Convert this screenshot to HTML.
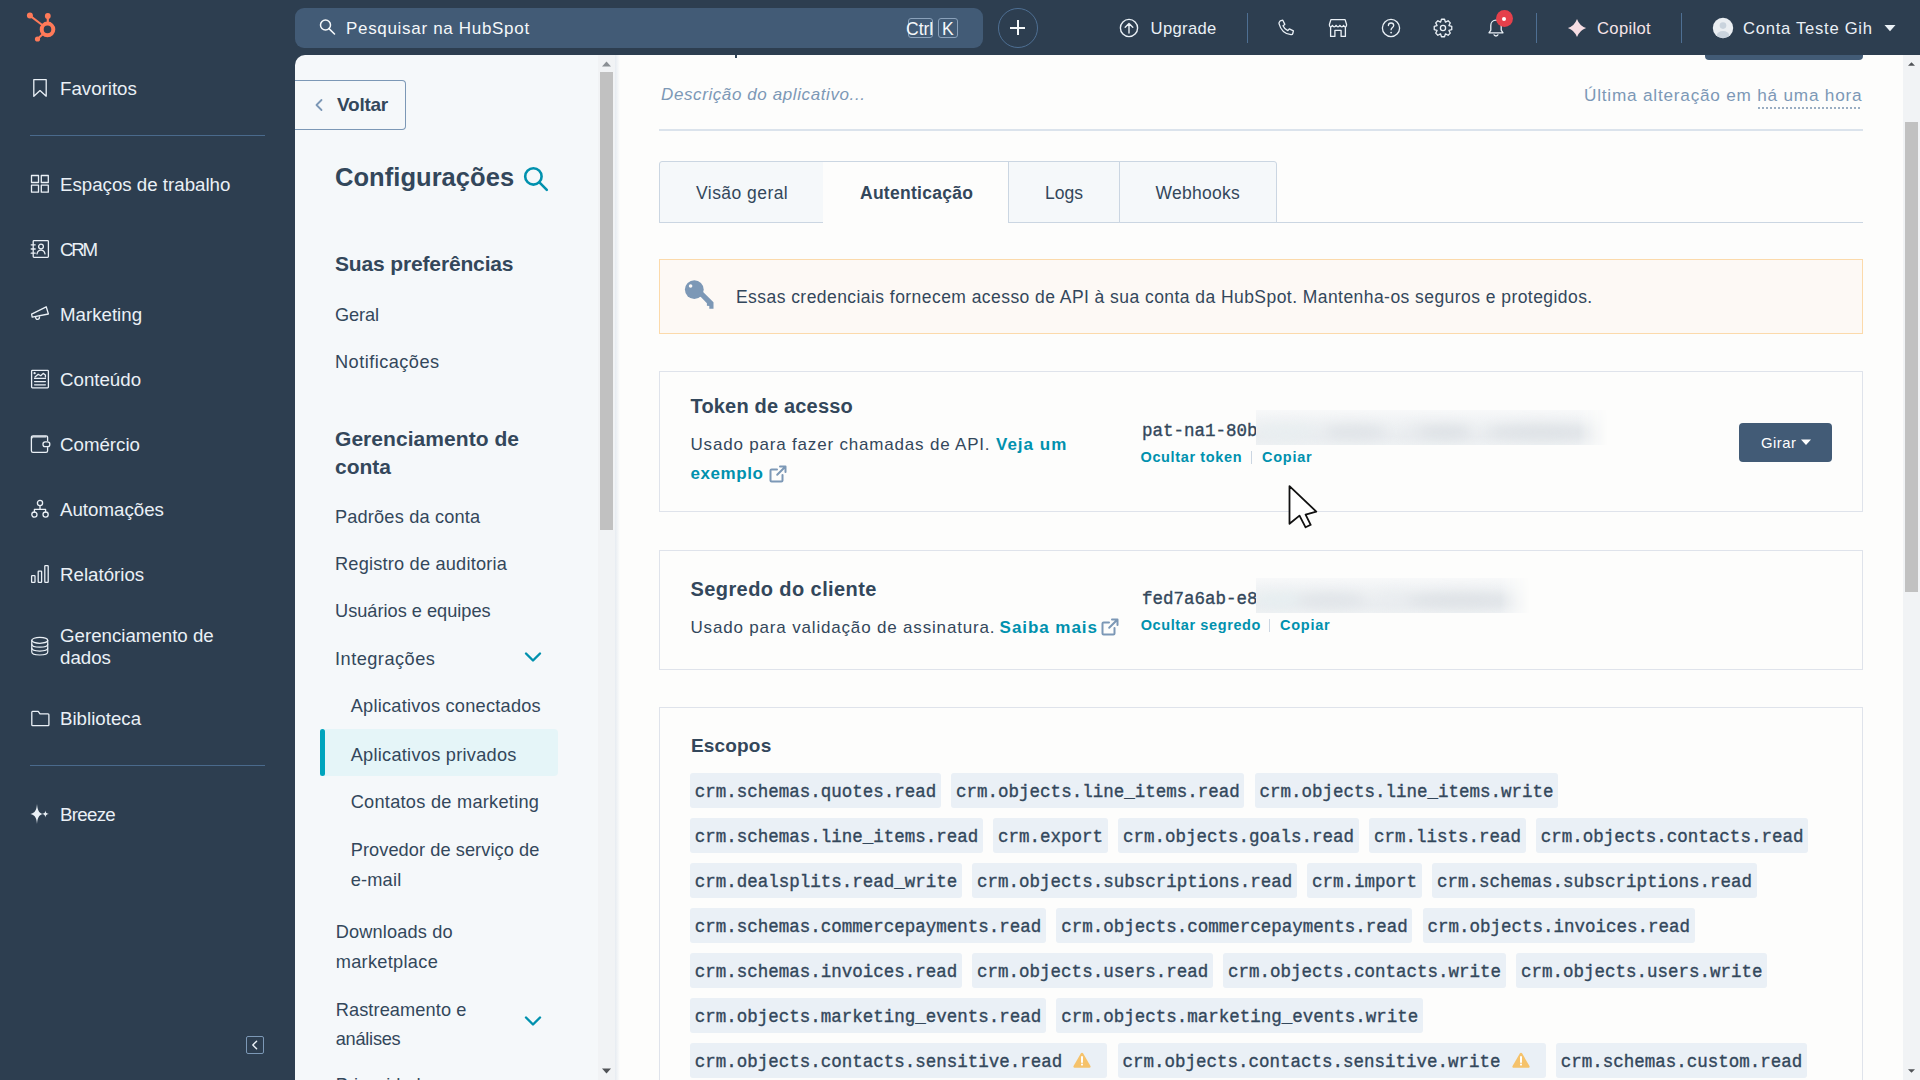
<!DOCTYPE html>
<html><head><meta charset="utf-8">
<style>
*{margin:0;padding:0;box-sizing:border-box}
html,body{width:1920px;height:1080px;overflow:hidden;background:#2d3e50;font-family:"Liberation Sans",sans-serif}
.a{position:absolute}
.t{position:absolute;white-space:nowrap;line-height:20px;height:20px}
.si{color:#eaf0f6;font-size:18.7px;left:60px}
.hr1{position:absolute;left:30px;width:235px;height:1px;background:#4a6a8c}
.tag{height:34.6px;line-height:39.4px;padding:0 4.7px;margin-right:10.5px;background:#eaf0f6;border-radius:3px;font-family:"Liberation Mono",monospace;font-size:17.5px;color:#33475b;white-space:nowrap;-webkit-text-stroke:0.35px #33475b}
</style></head><body>
<div class="a" style="left:295px;top:55px;width:320px;height:1025px;background:#f5f8fa;border-top-left-radius:10px"></div>
<div class="a" style="left:615px;top:55px;width:1305px;height:1025px;background:#fdfdfc"></div>
<div class="a" style="left:295px;top:80px;width:111px;height:50px;border:1px solid #7c98b6;border-left:none;border-radius:0 4px 4px 0;background:#f5f8fa"></div>
<svg class="a" style="left:312px;top:97px" width="14" height="16" viewBox="0 0 14 16" fill="none" stroke="#7c98b6" stroke-width="1.8" stroke-linecap="round" stroke-linejoin="round"><path d="M9.5 3l-5 5 5 5"/></svg>
<div class="t" style="left:337px;top:94.8px;font-size:19px;line-height:20px;height:20px;font-weight:bold;color:#33475b;letter-spacing:-0.240px;">Voltar</div>
<div class="t" style="left:335px;top:161.7px;font-size:25.5px;line-height:30px;height:30px;font-weight:bold;color:#33475b;letter-spacing:0.050px;">Configurações</div>
<svg class="a" style="left:523px;top:166px" width="26" height="26" viewBox="0 0 26 26" fill="none" stroke="#0091ae" stroke-width="2.6" stroke-linecap="round"><circle cx="10.4" cy="10.4" r="8.2"/><path d="M16.4 16.4l7.4 7.4"/></svg>
<div class="t" style="left:335px;top:251.9px;font-size:21px;line-height:24px;height:24px;font-weight:bold;color:#33475b;letter-spacing:-0.150px;">Suas preferências</div>
<div class="t" style="left:335px;top:305.0px;font-size:18.2px;line-height:20px;height:20px;font-weight:normal;color:#33475b;letter-spacing:-0.125px;">Geral</div>
<div class="t" style="left:335px;top:352.0px;font-size:18.2px;line-height:20px;height:20px;font-weight:normal;color:#33475b;letter-spacing:0.455px;">Notificações</div>
<div class="t" style="left:335px;top:506.5px;font-size:18.2px;line-height:20px;height:20px;font-weight:normal;color:#33475b;letter-spacing:0.167px;">Padrões da conta</div>
<div class="t" style="left:335px;top:554.3px;font-size:18.2px;line-height:20px;height:20px;font-weight:normal;color:#33475b;letter-spacing:0.200px;">Registro de auditoria</div>
<div class="t" style="left:335px;top:601.3px;font-size:18.2px;line-height:20px;height:20px;font-weight:normal;color:#33475b;letter-spacing:0.000px;">Usuários e equipes</div>
<div class="t" style="left:335px;top:649.0px;font-size:18.2px;line-height:20px;height:20px;font-weight:normal;color:#33475b;letter-spacing:0.480px;">Integrações</div>
<div class="t" style="left:335px;top:427.4px;font-size:21px;line-height:24px;height:24px;font-weight:bold;color:#33475b;letter-spacing:0.053px;">Gerenciamento de</div>
<div class="t" style="left:335px;top:455.0px;font-size:21px;line-height:24px;height:24px;font-weight:bold;color:#33475b;letter-spacing:0.000px;">conta</div>
<svg class="a" style="left:524px;top:651px" width="18" height="12" viewBox="0 0 18 12" fill="none" stroke="#0091ae" stroke-width="2.4" stroke-linecap="round" stroke-linejoin="round"><path d="M2 2.5l7 7 7-7"/></svg>
<div class="a" style="left:320px;top:729px;width:238px;height:47px;background:#e5f5f8;border-radius:0 4px 4px 0"></div>
<div class="a" style="left:320px;top:729px;width:5px;height:47px;background:#00a4bd;border-radius:3px"></div>
<div class="t" style="left:350.7px;top:696.0px;font-size:18.2px;line-height:20px;height:20px;font-weight:normal;color:#33475b;letter-spacing:0.238px;">Aplicativos conectados</div>
<div class="t" style="left:350.7px;top:744.7px;font-size:18.2px;line-height:20px;height:20px;font-weight:normal;color:#33475b;letter-spacing:0.263px;">Aplicativos privados</div>
<div class="t" style="left:350.7px;top:791.8px;font-size:18.2px;line-height:20px;height:20px;font-weight:normal;color:#33475b;letter-spacing:0.265px;">Contatos de marketing</div>
<div class="t" style="left:350.7px;top:839.7px;font-size:18.2px;line-height:20px;height:20px;font-weight:normal;color:#33475b;letter-spacing:0.076px;">Provedor de serviço de</div>
<div class="t" style="left:350.7px;top:869.7px;font-size:18.2px;line-height:20px;height:20px;font-weight:normal;color:#33475b;letter-spacing:0.200px;">e-mail</div>
<div class="t" style="left:335.7px;top:921.8px;font-size:18.2px;line-height:20px;height:20px;font-weight:normal;color:#33475b;letter-spacing:0.145px;">Downloads do</div>
<div class="t" style="left:335.7px;top:951.5px;font-size:18.2px;line-height:20px;height:20px;font-weight:normal;color:#33475b;letter-spacing:0.300px;">marketplace</div>
<div class="t" style="left:335.7px;top:999.7px;font-size:18.2px;line-height:20px;height:20px;font-weight:normal;color:#33475b;letter-spacing:0.100px;">Rastreamento e</div>
<div class="t" style="left:335.7px;top:1029.3px;font-size:18.2px;line-height:20px;height:20px;font-weight:normal;color:#33475b;letter-spacing:-0.243px;">análises</div>
<div class="t" style="left:335.7px;top:1074.5px;font-size:18.2px;line-height:20px;height:20px;font-weight:normal;color:#33475b;letter-spacing:0.000px;">Privacidade e</div>
<svg class="a" style="left:524px;top:1015px" width="18" height="12" viewBox="0 0 18 12" fill="none" stroke="#0091ae" stroke-width="2.4" stroke-linecap="round" stroke-linejoin="round"><path d="M2 2.5l7 7 7-7"/></svg>
<div class="a" style="left:598px;top:55px;width:17px;height:1025px;background:#f1f3f5"></div>
<div class="a" style="left:600px;top:72px;width:13px;height:458px;background:#c1c1c1"></div>
<svg class="a" style="left:602px;top:61px" width="9" height="6" viewBox="0 0 9 6"><path d="M0 5.5L4.5 .5 9 5.5z" fill="#8a8f94"/></svg>
<svg class="a" style="left:602px;top:1068px" width="9" height="6" viewBox="0 0 9 6"><path d="M0 .5L4.5 5.5 9 .5z" fill="#505357"/></svg>
<div class="a" style="left:615px;top:55px;width:5px;height:1025px;background:linear-gradient(90deg,#e6ebf1,#fdfdfc)"></div>
<div class="a" style="left:1705px;top:50px;width:158px;height:10px;background:#425b76;border-radius:0 0 4px 4px"></div>
<div class="a" style="left:734.5px;top:55px;width:2px;height:3px;background:#33475b"></div>
<div class="t" style="left:661px;top:84.8px;font-size:17px;line-height:20px;height:20px;font-weight:normal;color:#7c98b6;letter-spacing:0.600px;font-style:italic;">Descrição do aplicativo...</div>
<div class="t" style="left:1584px;top:84.8px;font-size:17.2px;line-height:20px;height:20px;font-weight:normal;color:#7c98b6;letter-spacing:0.783px;">Última alteração em há uma hora</div>
<div class="a" style="left:1758px;top:107px;width:103px;height:2px;background:repeating-linear-gradient(90deg,#9aaec3 0 2px,transparent 2px 4px)"></div>
<div class="a" style="left:659px;top:129px;width:1204px;height:2px;background:#dbe3ec"></div>
<div class="a" style="left:659px;top:222px;width:1204px;height:1px;background:#cbd6e2"></div>
<div class="a" style="left:659px;top:161px;width:165px;height:62px;background:#f5f8fa;border:1px solid #cbd6e2;border-top-left-radius:3px"></div>
<div class="a" style="left:823px;top:161px;width:186px;height:62px;background:#fdfdfc;border-top:1px solid #cbd6e2"></div>
<div class="a" style="left:1008px;top:161px;width:112px;height:62px;background:#f5f8fa;border:1px solid #cbd6e2"></div>
<div class="a" style="left:1119px;top:161px;width:158px;height:62px;background:#f5f8fa;border:1px solid #cbd6e2;border-top-right-radius:3px"></div>
<div class="t" style="left:696px;top:182.8px;font-size:17.5px;line-height:20px;height:20px;font-weight:normal;color:#33475b;letter-spacing:0.450px;">Visão geral</div>
<div class="t" style="left:860px;top:182.8px;font-size:17.5px;line-height:20px;height:20px;font-weight:bold;color:#33475b;letter-spacing:0.273px;">Autenticação</div>
<div class="t" style="left:1045px;top:182.8px;font-size:17.5px;line-height:20px;height:20px;font-weight:normal;color:#33475b;letter-spacing:0.000px;">Logs</div>
<div class="t" style="left:1155.5px;top:182.8px;font-size:17.5px;line-height:20px;height:20px;font-weight:normal;color:#33475b;letter-spacing:0.286px;">Webhooks</div>
<div class="a" style="left:659px;top:259px;width:1204px;height:75px;background:#fdf9f5;border:1px solid #fcdaab"></div>
<svg class="a" style="left:683px;top:279px" width="34" height="34" viewBox="0 0 34 34"><g fill="#7c98b6"><circle cx="11.3" cy="10.6" r="9.4"/><path d="M14.5 14.5l3.6-3.6 12.4 12.4v6.4h-4.2v-2.6l-2.4-.4v-2.4z"/></g><circle cx="7.6" cy="7" r="1.8" fill="#fdf9f5"/></svg>
<div class="t" style="left:736px;top:286.7px;font-size:17.5px;line-height:20px;height:20px;font-weight:normal;color:#33475b;letter-spacing:0.443px;">Essas credenciais fornecem acesso de API à sua conta da HubSpot. Mantenha-os seguros e protegidos.</div>
<div class="a" style="left:659px;top:371px;width:1204px;height:141px;border:1px solid #dfe3eb"></div>
<div class="t" style="left:690.5px;top:393.9px;font-size:20px;line-height:24px;height:24px;font-weight:bold;color:#33475b;letter-spacing:0.179px;">Token de acesso</div>
<div class="t" style="left:690.5px;top:434.9px;font-size:17px;line-height:20px;height:20px;font-weight:normal;color:#33475b;letter-spacing:0.812px;">Usado para fazer chamadas de API.</div>
<div class="t" style="left:996px;top:434.9px;font-size:17px;line-height:20px;height:20px;font-weight:bold;color:#0091ae;letter-spacing:1.000px;">Veja um</div>
<div class="t" style="left:690.5px;top:463.5px;font-size:17px;line-height:20px;height:20px;font-weight:bold;color:#0091ae;letter-spacing:0.583px;">exemplo</div>
<svg class="a" style="left:769px;top:464.5px" width="18" height="18" viewBox="0 0 18 18" fill="none" stroke="#7c98b6" stroke-width="2" stroke-linecap="round" stroke-linejoin="round"><path d="M13.5 10v5.4c0 .6-.5 1.1-1.1 1.1H2.6c-.6 0-1.1-.5-1.1-1.1V5.6c0-.6.5-1.1 1.1-1.1H8"/><path d="M11 1.5h5.5V7M16.5 1.5L8.2 9.8"/></svg>
<div class="t" style="left:1142px;top:421px;font-family:'Liberation Mono',monospace;font-size:17.5px;line-height:20px;color:#33475b;-webkit-text-stroke:0.35px #33475b">pat-na1-80b</div>
<div class="a" style="left:1256px;top:410px;width:352px;height:35px;overflow:hidden;background:linear-gradient(180deg,#f7f8f9 0%,#eef1f3 45%,#eaedf0 75%,#eef1f3 100%);-webkit-mask-image:linear-gradient(90deg,#000 0%,#000 calc(100% - 30px),transparent 100%)"><div style="position:absolute;left:0;top:0;width:100%;height:100%;filter:blur(6px)"><div style="position:absolute;left:0px;top:14.7px;width:60px;height:14.7px;border-radius:50%;background:#e8eef0"></div><div style="position:absolute;left:60px;top:14.7px;width:50px;height:14.7px;border-radius:50%;background:#e9ecef"></div><div style="position:absolute;left:70px;top:14.7px;width:60px;height:14.7px;border-radius:50%;background:#dfe3e7"></div><div style="position:absolute;left:150px;top:14.7px;width:40px;height:14.7px;border-radius:50%;background:#e6e9ec"></div><div style="position:absolute;left:165px;top:14.7px;width:50px;height:14.7px;border-radius:50%;background:#dde1e5"></div><div style="position:absolute;left:230px;top:14.7px;width:110px;height:14.7px;border-radius:50%;background:#dde1e5"></div></div></div>
<div class="t" style="left:1140.5px;top:446.7px;font-size:14.5px;line-height:20px;height:20px;font-weight:bold;color:#0091ae;letter-spacing:0.633px;">Ocultar token</div>
<div class="a" style="left:1251px;top:451px;width:1px;height:13px;background:#cbd6e2"></div>
<div class="t" style="left:1262px;top:446.7px;font-size:14.5px;line-height:20px;height:20px;font-weight:bold;color:#0091ae;letter-spacing:0.740px;">Copiar</div>
<div class="a" style="left:1739px;top:423px;width:93px;height:39px;background:#425b76;border-radius:4px"></div>
<div class="t" style="left:1761px;top:432.7px;font-size:14.8px;line-height:20px;height:20px;font-weight:normal;color:#fff;letter-spacing:0.500px;">Girar</div>
<svg class="a" style="left:1800px;top:439px" width="12" height="7" viewBox="0 0 12 7"><path d="M1 .5h10L6 6z" fill="#fff"/></svg>
<div class="a" style="left:659px;top:550px;width:1204px;height:120px;border:1px solid #dfe3eb"></div>
<div class="t" style="left:690.5px;top:576.6px;font-size:20px;line-height:24px;height:24px;font-weight:bold;color:#33475b;letter-spacing:0.412px;">Segredo do cliente</div>
<div class="t" style="left:690.5px;top:617.6px;font-size:17px;line-height:20px;height:20px;font-weight:normal;color:#33475b;letter-spacing:0.824px;">Usado para validação de assinatura.</div>
<div class="t" style="left:999.6px;top:617.6px;font-size:17px;line-height:20px;height:20px;font-weight:bold;color:#0091ae;letter-spacing:0.944px;">Saiba mais</div>
<svg class="a" style="left:1101px;top:617.5px" width="18" height="18" viewBox="0 0 18 18" fill="none" stroke="#7c98b6" stroke-width="2" stroke-linecap="round" stroke-linejoin="round"><path d="M13.5 10v5.4c0 .6-.5 1.1-1.1 1.1H2.6c-.6 0-1.1-.5-1.1-1.1V5.6c0-.6.5-1.1 1.1-1.1H8"/><path d="M11 1.5h5.5V7M16.5 1.5L8.2 9.8"/></svg>
<div class="t" style="left:1142px;top:589px;font-family:'Liberation Mono',monospace;font-size:17.5px;line-height:20px;color:#33475b;-webkit-text-stroke:0.35px #33475b">fed7a6ab-e8</div>
<div class="a" style="left:1256px;top:578px;width:274px;height:35px;overflow:hidden;background:linear-gradient(180deg,#f7f8f9 0%,#eef1f3 45%,#eaedf0 75%,#eef1f3 100%);-webkit-mask-image:linear-gradient(90deg,#000 0%,#000 calc(100% - 30px),transparent 100%)"><div style="position:absolute;left:0;top:0;width:100%;height:100%;filter:blur(6px)"><div style="position:absolute;left:0px;top:14.7px;width:50px;height:14.7px;border-radius:50%;background:#e6eef0"></div><div style="position:absolute;left:40px;top:14.7px;width:70px;height:14.7px;border-radius:50%;background:#e0e4e8"></div><div style="position:absolute;left:120px;top:14.7px;width:40px;height:14.7px;border-radius:50%;background:#e9ecef"></div><div style="position:absolute;left:150px;top:14.7px;width:110px;height:14.7px;border-radius:50%;background:#dde1e5"></div></div></div>
<div class="t" style="left:1140.7px;top:614.9px;font-size:14.5px;line-height:20px;height:20px;font-weight:bold;color:#0091ae;letter-spacing:0.607px;">Ocultar segredo</div>
<div class="a" style="left:1269px;top:619px;width:1px;height:13px;background:#cbd6e2"></div>
<div class="t" style="left:1280px;top:614.9px;font-size:14.5px;line-height:20px;height:20px;font-weight:bold;color:#0091ae;letter-spacing:0.740px;">Copiar</div>
<div class="a" style="left:659px;top:707px;width:1204px;height:400px;border:1px solid #dfe3eb"></div>
<div class="t" style="left:691px;top:733.9px;font-size:19px;line-height:24px;height:24px;font-weight:bold;color:#33475b;letter-spacing:0.167px;">Escopos</div>
<div class="a" style="left:690px;top:773px;width:1150px">
<div style="display:flex;height:45px"><div class="tag">crm.schemas.quotes.read</div><div class="tag">crm.objects.line_items.read</div><div class="tag">crm.objects.line_items.write</div></div>
<div style="display:flex;height:45px"><div class="tag">crm.schemas.line_items.read</div><div class="tag">crm.export</div><div class="tag">crm.objects.goals.read</div><div class="tag">crm.lists.read</div><div class="tag">crm.objects.contacts.read</div></div>
<div style="display:flex;height:45px"><div class="tag">crm.dealsplits.read_write</div><div class="tag">crm.objects.subscriptions.read</div><div class="tag">crm.import</div><div class="tag">crm.schemas.subscriptions.read</div></div>
<div style="display:flex;height:45px"><div class="tag">crm.schemas.commercepayments.read</div><div class="tag">crm.objects.commercepayments.read</div><div class="tag">crm.objects.invoices.read</div></div>
<div style="display:flex;height:45px"><div class="tag">crm.schemas.invoices.read</div><div class="tag">crm.objects.users.read</div><div class="tag">crm.objects.contacts.write</div><div class="tag">crm.objects.users.write</div></div>
<div style="display:flex;height:45px"><div class="tag">crm.objects.marketing_events.read</div><div class="tag">crm.objects.marketing_events.write</div></div>
<div style="display:flex;height:45px"><div class="tag" style="padding-right:15px">crm.objects.contacts.sensitive.read<svg style="display:inline-block;vertical-align:middle;margin:-4px 1px 0 11px" width="18" height="16" viewBox="0 0 20 18"><path d="M10 .8c.5 0 .9.3 1.2.7l8.3 14.3c.5.9-.1 1.9-1.1 1.9H1.6c-1 0-1.6-1-1.1-1.9L8.8 1.5c.3-.4.7-.7 1.2-.7z" fill="#f5c26b"/><path d="M10 5.6v5.6" stroke="#fff" stroke-width="2.2" stroke-linecap="round"/><circle cx="10" cy="14.2" r="1.2" fill="#fff"/></svg></div><div class="tag" style="padding-right:15px">crm.objects.contacts.sensitive.write<svg style="display:inline-block;vertical-align:middle;margin:-4px 1px 0 11px" width="18" height="16" viewBox="0 0 20 18"><path d="M10 .8c.5 0 .9.3 1.2.7l8.3 14.3c.5.9-.1 1.9-1.1 1.9H1.6c-1 0-1.6-1-1.1-1.9L8.8 1.5c.3-.4.7-.7 1.2-.7z" fill="#f5c26b"/><path d="M10 5.6v5.6" stroke="#fff" stroke-width="2.2" stroke-linecap="round"/><circle cx="10" cy="14.2" r="1.2" fill="#fff"/></svg></div><div class="tag">crm.schemas.custom.read</div></div>
</div>
<div class="a" style="left:1903px;top:55px;width:17px;height:1025px;background:#f1f3f5"></div>
<div class="a" style="left:1905px;top:122px;width:13px;height:470px;background:#c1c1c1"></div>
<svg class="a" style="left:1908px;top:62px" width="7" height="4" viewBox="0 0 9 6" preserveAspectRatio="none"><path d="M0 5.5L4.5 .5 9 5.5z" fill="#505357"/></svg>
<svg class="a" style="left:1908px;top:1069px" width="7" height="4" viewBox="0 0 9 6" preserveAspectRatio="none"><path d="M0 .5L4.5 5.5 9 .5z" fill="#505357"/></svg>
<svg class="a" style="left:1288px;top:485px" width="32" height="46" viewBox="0 0 32 46"><path d="M1.5 1.1V38.8L11.5 30.6L17.6 42.3L22.7 39.8L17.6 29.6L28.3 26.6Z" fill="#fff" stroke="#111" stroke-width="1.8" stroke-linejoin="round"/></svg>


<svg class="a" style="left:30px;top:78px" width="20" height="20" viewBox="0 0 20 20" fill="none" stroke="#eaf0f6" stroke-width="1.3" stroke-linejoin="round" stroke-linecap="round"><path d="M3.8 1.6h12.4v16.6L10 12.6l-6.2 5.6z"/></svg>
<div class="t si" style="top:78.7px">Favoritos</div>
<div class="hr1" style="top:135px"></div>
<svg class="a" style="left:30px;top:174px" width="20" height="20" viewBox="0 0 20 20" fill="none" stroke="#eaf0f6" stroke-width="1.3" stroke-linejoin="round" stroke-linecap="round"><rect x="1.5" y="1.5" width="7" height="7"/><rect x="11.3" y="1.5" width="7" height="7"/><rect x="1.5" y="11.2" width="7" height="7"/><rect x="11.3" y="11.2" width="7" height="7"/></svg>
<div class="t si" style="top:174.7px">Espaços de trabalho</div>
<svg class="a" style="left:30px;top:239px" width="20" height="20" viewBox="0 0 20 20" fill="none" stroke="#eaf0f6" stroke-width="1.3" stroke-linejoin="round" stroke-linecap="round"><rect x="3.2" y="1.6" width="15.2" height="16.8" rx=".8"/><path d="M1.2 5.8h4M1.2 10h4M1.2 14.2h4"/><circle cx="11" cy="7.6" r="2.4"/><path d="M7 14.8c.6-2.3 2.2-3.6 4-3.6s3.4 1.3 4 3.6"/></svg>
<div class="t si" style="top:239.5px;letter-spacing:-2.2px">CRM</div>
<svg class="a" style="left:30px;top:304px" width="20" height="20" viewBox="0 0 20 20" fill="none" stroke="#eaf0f6" stroke-width="1.3" stroke-linejoin="round" stroke-linecap="round"><path d="M1.6 10.2l14.6-7.4 2.2 7.2-16.2 3.2z"/><path d="M5.6 13.2c.1 1.4.9 2.2 2 2.2s1.9-.9 1.9-2.6"/></svg>
<div class="t si" style="top:304.5px">Marketing</div>
<svg class="a" style="left:30px;top:369px" width="20" height="20" viewBox="0 0 20 20" fill="none" stroke="#eaf0f6" stroke-width="1.3" stroke-linejoin="round" stroke-linecap="round"><rect x="1.6" y="1.4" width="16.8" height="17.4" rx=".8"/><path d="M4.6 9.4h10.8M4.6 12.6h10.8M4.6 15.8h10.8"/><path d="M5 8l3.2-2.8 2.6 1.6 2.4-2.4 2.2 1.6V8"/><circle cx="4.6" cy="4.2" r=".5" fill="#eaf0f6"/></svg>
<div class="t si" style="top:369.5px">Conteúdo</div>
<svg class="a" style="left:30px;top:434px" width="21" height="20" viewBox="0 0 21 20" fill="none" stroke="#eaf0f6" stroke-width="1.3" stroke-linejoin="round" stroke-linecap="round"><path d="M17.6 6.6V3.4c0-.9-.6-1.6-1.5-1.6H3c-1 0-1.6.7-1.6 1.6v13.4c0 .9.6 1.6 1.6 1.6h13c.9 0 1.6-.7 1.6-1.6v-3.2"/><path d="M1.6 4.4c0-1 .7-1.6 1.6-1.6H16"/><rect x="13" y="7.8" width="6.8" height="4.8" rx="2.2"/></svg>
<div class="t si" style="top:434.5px">Comércio</div>
<svg class="a" style="left:30px;top:499px" width="20" height="20" viewBox="0 0 20 20" fill="none" stroke="#eaf0f6" stroke-width="1.3" stroke-linejoin="round" stroke-linecap="round"><circle cx="10" cy="4" r="2.6"/><circle cx="4.4" cy="15.6" r="2.6"/><circle cx="15.6" cy="15.6" r="2.6"/><path d="M10 6.6v3.8M4.4 13V10.4h11.2V13"/></svg>
<div class="t si" style="top:499.5px">Automações</div>
<svg class="a" style="left:30px;top:564px" width="20" height="20" viewBox="0 0 20 20" fill="none" stroke="#eaf0f6" stroke-width="1.3" stroke-linejoin="round" stroke-linecap="round"><rect x="1.6" y="11.6" width="3.4" height="6.8" rx=".6"/><rect x="8.2" y="7.2" width="3.4" height="11.2" rx=".6"/><rect x="14.8" y="1.6" width="3.4" height="16.8" rx=".6"/></svg>
<div class="t si" style="top:564.5px">Relatórios</div>
<svg class="a" style="left:30px;top:635.5px" width="19.5" height="20.5" viewBox="0 0 21 22" fill="none" stroke="#eaf0f6" stroke-width="1.3" stroke-linejoin="round" stroke-linecap="round"><ellipse cx="10.5" cy="4.6" rx="8.6" ry="3.2"/><path d="M1.9 4.6v12.6c0 1.8 3.8 3.2 8.6 3.2s8.6-1.4 8.6-3.2V4.6"/><path d="M1.9 8.8c0 1.8 3.8 3.2 8.6 3.2s8.6-1.4 8.6-3.2M1.9 13c0 1.8 3.8 3.2 8.6 3.2s8.6-1.4 8.6-3.2"/></svg>
<div class="t si" style="top:625px;line-height:22px;height:44px">Gerenciamento de<br>dados</div>
<svg class="a" style="left:30px;top:710px" width="20" height="17" viewBox="0 0 20 17" fill="none" stroke="#eaf0f6" stroke-width="1.3" stroke-linejoin="round"><path d="M1.8 2.2c0-.5.3-.9.8-.9h5.6l1.8 2.6h8c.5 0 .9.4.9.9v10c0 .5-.4.9-.9.9H2.7c-.5 0-.9-.4-.9-.9z"/></svg>
<div class="t si" style="top:708.5px">Biblioteca</div>
<div class="hr1" style="top:765px"></div>
<svg class="a" style="left:29px;top:803px" width="22" height="22" viewBox="0 0 22 22"><path d="M8 1C8.5 7 9.8 9.8 13.6 11 9.8 12.2 8.5 15 8 21 7.5 15 6.2 12.2 1.4 11 6.2 9.8 7.5 7 8 1z" fill="#eaf0f6"/><path d="M16.4 7.6c.3 2.4 1 3.1 3.6 3.4-2.6.3-3.3 1-3.6 3.4-.3-2.4-1-3.1-3.6-3.4 2.6-.3 3.3-1 3.6-3.4z" fill="#eaf0f6"/></svg>
<div class="t si" style="top:804.7px;letter-spacing:-0.7px">Breeze</div>
<div class="a" style="left:246px;top:1036px;width:18px;height:18px;border:1px solid #7c98b6;border-radius:2px"></div>
<svg class="a" style="left:246px;top:1036px" width="18" height="18" viewBox="0 0 18 18" fill="none" stroke="#eaf0f6" stroke-width="1.4" stroke-linecap="round" stroke-linejoin="round"><path d="M10.6 5.2L6.8 9l3.8 3.8"/></svg>

<div class="a" style="left:0;top:0;width:1920px;height:55px;background:#2d3e50">
 <svg class="a" style="left:24px;top:10px" width="34" height="34" viewBox="0 0 34 34">
  <g fill="#ff7a59" stroke="#ff7a59">
   <circle cx="23.5" cy="19.4" r="5.8" fill="none" stroke-width="4"/>
   <circle cx="5.9" cy="5.6" r="3" stroke="none"/>
   <circle cx="23.8" cy="6" r="2.9" stroke="none"/>
   <circle cx="13.5" cy="29" r="2.6" stroke="none"/>
   <line x1="5.9" y1="5.6" x2="19.5" y2="16" stroke-width="2"/>
   <line x1="23.8" y1="6" x2="23.8" y2="13" stroke-width="2.2"/>
   <line x1="13.5" y1="29" x2="19.5" y2="23.5" stroke-width="2"/>
  </g>
 </svg>
 <div class="a" style="left:295px;top:8px;width:688px;height:40px;border-radius:9px;background:#425b76"></div>
 <svg class="a" style="left:318px;top:18px" width="20" height="20" viewBox="0 0 20 20"><circle cx="7.5" cy="7" r="5" fill="none" stroke="#f5f8fa" stroke-width="1.5"/><line x1="11" y1="10.6" x2="16.5" y2="16" stroke="#f5f8fa" stroke-width="1.6" stroke-linecap="round"/></svg>
 <div class="t" style="left:346px;top:19px;font-size:17px;color:#f5f8fa;letter-spacing:0.684px">Pesquisar na HubSpot</div>
 <div class="a" style="left:908px;top:18px;width:25px;height:20px;border:1px solid #8aa1ba;border-radius:3px"></div>
 <div class="a" style="left:938px;top:18px;width:20px;height:20px;border:1px solid #8aa1ba;border-radius:3px"></div>
 <div class="t" style="left:906px;top:19px;font-size:17.5px;color:#f5f8fa">Ctrl</div>
 <div class="t" style="left:942px;top:19px;font-size:17.5px;color:#f5f8fa">K</div>
 <div class="a" style="left:998px;top:8px;width:40px;height:40px;border:1px solid #4e6f93;border-radius:50%"></div>
 <div class="a" style="left:1010px;top:27px;width:15px;height:2px;background:#f5f8fa"></div>
 <div class="a" style="left:1016.5px;top:20px;width:2px;height:15px;background:#f5f8fa"></div>
 <svg class="a" style="left:1119px;top:18px" width="20" height="20" viewBox="0 0 20 20" fill="none" stroke="#eaf0f6" stroke-width="1.4"><circle cx="10" cy="10" r="8.6"/><path d="M10 15V5.5M6.2 9.2L10 5.4l3.8 3.8" stroke-linecap="round" stroke-linejoin="round"/></svg>
 <div class="t" style="left:1150.6px;top:18.5px;font-size:16.6px;color:#eaf0f6;letter-spacing:0.333px">Upgrade</div>
 <div class="a" style="left:1247px;top:13px;width:1px;height:30px;background:#4e6f93"></div>
 <svg class="a" style="left:1277px;top:19px" width="19" height="19" viewBox="0 0 19 19" fill="none" stroke="#eaf0f6" stroke-width="1.3" stroke-linejoin="round"><path d="M3.2 1.8l2.6-.6 2 4.2-1.8 1.4c.9 2.2 2.6 3.9 4.8 4.9l1.5-1.8 4.1 2-.6 2.6c-.2.8-1 1.3-1.8 1.2C7.9 15.1 3.7 10.9 2 4.6c-.2-.9.3-1.7 1.2-2.8z"/></svg>
 <svg class="a" style="left:1328px;top:18px" width="20" height="20" viewBox="0 0 20 20" fill="none" stroke="#eaf0f6" stroke-width="1.3" stroke-linejoin="round"><path d="M2.9 1.6h14.2l1.4 4.6c.3 1.1-.3 2.6-1.2 2.6-.9 0-1.4-.9-1.6-1.4-.3.6-.9 1.4-1.9 1.4s-1.6-.8-1.9-1.4c-.3.6-.9 1.4-1.9 1.4s-1.6-.8-1.9-1.4c-.3.6-.9 1.4-1.9 1.4s-1.6-.8-1.9-1.4c-.2.5-.7 1.4-1.6 1.4-.9 0-1.5-1.5-1.2-2.6z"/><path d="M2.6 8.8v9.6h4.3v-6.1h6.2v6.1h4.3V8.8"/></svg>
 <svg class="a" style="left:1381px;top:18px" width="20" height="20" viewBox="0 0 20 20" fill="none" stroke="#eaf0f6" stroke-width="1.3"><circle cx="10" cy="10" r="8.6"/><path d="M7.4 7.6c0-1.5 1.2-2.6 2.7-2.6s2.6 1.1 2.6 2.5c0 1.9-2.6 2.1-2.6 4.2" stroke-linecap="round"/><circle cx="10.1" cy="14.6" r=".9" fill="#eaf0f6" stroke="none"/></svg>
 <svg class="a" style="left:1433px;top:18px" width="20" height="20" viewBox="0 0 20 20" fill="none" stroke="#eaf0f6" stroke-width="1.3" stroke-linejoin="round"><path d="M15.93 7.60 L18.76 8.45 L18.76 11.55 L15.93 12.40 L15.89 12.50 L17.29 15.10 L15.10 17.29 L12.50 15.89 L12.40 15.93 L11.55 18.76 L8.45 18.76 L7.60 15.93 L7.50 15.89 L4.90 17.29 L2.71 15.10 L4.11 12.50 L4.07 12.40 L1.24 11.55 L1.24 8.45 L4.07 7.60 L4.11 7.50 L2.71 4.90 L4.90 2.71 L7.50 4.11 L7.60 4.07 L8.45 1.24 L11.55 1.24 L12.40 4.07 L12.50 4.11 L15.10 2.71 L17.29 4.90 L15.89 7.50Z"/><circle cx="10" cy="10" r="2.6"/></svg>
 <svg class="a" style="left:1486px;top:18px" width="20" height="20" viewBox="0 0 20 20" fill="none" stroke="#eaf0f6" stroke-width="1.3" stroke-linejoin="round"><path d="M10 2.2c-3 0-5.2 2.3-5.2 5.3v4.6L3 14.8h14l-1.8-2.7V7.5c0-3-2.2-5.3-5.2-5.3z"/><path d="M7.8 16.4c.3 1 1.1 1.6 2.2 1.6s1.9-.6 2.2-1.6"/></svg>
 <div class="a" style="left:1496px;top:10px;width:17px;height:17px;border-radius:50%;background:#e5404b"></div>
 <div class="a" style="left:1502px;top:16.5px;width:4px;height:4px;border-radius:50%;background:#fff"></div>
 <div class="a" style="left:1536px;top:13px;width:1px;height:30px;background:#4e6f93"></div>
 <svg class="a" style="left:1567px;top:18px" width="20" height="20" viewBox="0 0 20 20"><path d="M10 .9Q12.4 7.6 19.1 10Q12.4 12.4 10 19.1Q7.6 12.4 .9 10Q7.6 7.6 10 .9z" fill="#f6dde3"/></svg>
 <div class="t" style="left:1597px;top:18.5px;font-size:16.6px;color:#f6e4e8;letter-spacing:0.333px">Copilot</div>
 <div class="a" style="left:1681px;top:13px;width:1px;height:30px;background:#4e6f93"></div>
 <svg class="a" style="left:1712px;top:17px" width="22" height="22" viewBox="0 0 22 22"><defs><clipPath id="avc"><circle cx="11" cy="11" r="10.2"/></clipPath></defs><circle cx="11" cy="11" r="10.2" fill="#eaeef2"/><g clip-path="url(#avc)" fill="#c9d3dd"><circle cx="11" cy="8.6" r="3.3"/><ellipse cx="11" cy="19" rx="6.5" ry="5"/></g></svg>
 <div class="t" style="left:1743px;top:18.5px;font-size:16.6px;color:#eaf0f6;letter-spacing:0.736px">Conta Teste Gih</div>
 <svg class="a" style="left:1884px;top:24px" width="12" height="8" viewBox="0 0 12 8"><path d="M.5 1h11L6 7.2z" fill="#eaf0f6"/></svg>
</div>
</body></html>
